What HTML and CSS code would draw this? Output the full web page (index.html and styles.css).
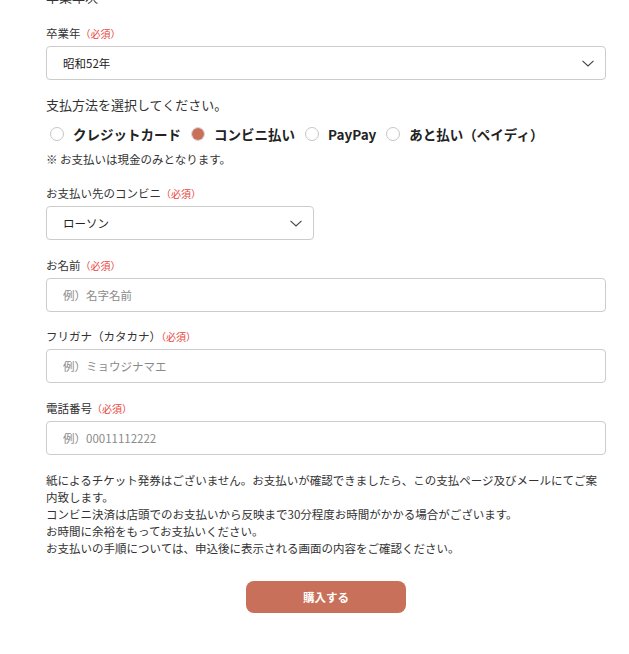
FILE: index.html
```html
<!DOCTYPE html>
<html lang="ja">
<head>
<meta charset="utf-8">
<title>購入フォーム</title>
<link rel="stylesheet" href="styles.css">
</head>
<body>
<div class="form">
  <h2 class="section-title">卒業年次</h2>

  <div class="field">
    <div class="label">卒業年<span class="req">（必須）</span></div>
    <div class="select">
      <span>昭和52年</span>
      <svg class="chev" width="12" height="7" viewBox="0 0 12 7"><path d="M0.5 0.8 L6 6 L11.5 0.8" fill="none" stroke="#444" stroke-width="1.1"/></svg>
    </div>
  </div>

  <div class="pay-title">支払方法を選択してください。</div>
  <div class="radios">
    <label class="radio"><span class="circle"></span><span class="rtext">クレジットカード</span></label>
    <label class="radio"><span class="circle checked"><span class="dot"></span></span><span class="rtext">コンビニ払い</span></label>
    <label class="radio"><span class="circle"></span><span class="rtext">PayPay</span></label>
    <label class="radio"><span class="circle"></span><span class="rtext">あと払い（ペイディ）</span></label>
  </div>
  <div class="note">※ お支払いは現金のみとなります。</div>

  <div class="field">
    <div class="label">お支払い先のコンビニ<span class="req">（必須）</span></div>
    <div class="select small">
      <span>ローソン</span>
      <svg class="chev" width="12" height="7" viewBox="0 0 12 7"><path d="M0.5 0.8 L6 6 L11.5 0.8" fill="none" stroke="#444" stroke-width="1.1"/></svg>
    </div>
  </div>

  <div class="field">
    <div class="label">お名前<span class="req">（必須）</span></div>
    <input class="input" type="text" placeholder="例）名字名前">
  </div>

  <div class="field">
    <div class="label">フリガナ（カタカナ）<span class="req">（必須）</span></div>
    <input class="input" type="text" placeholder="例）ミョウジナマエ">
  </div>

  <div class="field">
    <div class="label">電話番号<span class="req">（必須）</span></div>
    <input class="input" type="text" placeholder="例）00011112222">
  </div>

  <p class="info">紙によるチケット発券はございません。お支払いが確認できましたら、この支払ページ及びメールにてご案内致します。<br>コンビニ決済は店頭でのお支払いから反映まで30分程度お時間がかかる場合がございます。<br>お時間に余裕をもってお支払いください。<br>お支払いの手順については、申込後に表示される画面の内容をご確認ください。</p>

  <div class="actions">
    <button class="buy" type="button">購入する</button>
  </div>
</div>
</body>
</html>
```

FILE: styles.css
```css
* { box-sizing: border-box; }
html, body { margin: 0; padding: 0; background: #fff; }
body {
  font-family: "Noto Sans CJK JP", "Noto Sans", sans-serif;
  color: #333;
  font-size: 11.5px;
}
.form {
  width: 560px;
  margin-left: 46px;
}
.section-title {
  font-size: 13px;
  font-weight: normal;
  line-height: 20px;
  margin: -13px 0 18px;
  color: #333;
}
.field { margin-bottom: 16.5px; }
.label {
  line-height: 17px;
  margin-bottom: 4px;
  color: #333;
}
.req {
  color: #e8453c;
  font-size: 10px;
}
.select {
  height: 34px;
  border: 1px solid #ccc;
  border-radius: 4px;
  display: flex;
  align-items: center;
  justify-content: space-between;
  padding: 0 11px 0 16px;
  color: #222;
  font-size: 11.5px;
}
.select.small { width: 268px; }
.chev { display: block; }
.pay-title {
  font-size: 13px;
  line-height: 20px;
  margin-top: -2px;
  color: #333;
}
.radios {
  display: flex;
  align-items: center;
  height: 22px;
  margin-top: 8px;
  padding-left: 4px;
}
.radio {
  display: flex;
  align-items: center;
  gap: 9px;
  margin-right: 10px;
}
.circle {
  width: 14px;
  height: 14px;
  border: 1px solid #c6c6c6;
  border-radius: 50%;
  display: flex;
  align-items: center;
  justify-content: center;
  flex-shrink: 0;
  background: #fff;
}
.circle.checked { border-color: #d4d4d4; }
.dot {
  width: 12px;
  height: 12px;
  border-radius: 50%;
  background: #c87059;
}
.rtext {
  font-weight: bold;
  font-size: 13.5px;
  color: #222;
  line-height: 22px;
}
.note {
  line-height: 17px;
  margin-top: 6px;
  margin-bottom: 17.5px;
  color: #333;
}
.input {
  display: block;
  width: 100%;
  height: 34px;
  border: 1px solid #ccc;
  border-radius: 4px;
  padding: 0 16px;
  font-family: inherit;
  font-size: 11.5px;
  color: #222;
  outline: none;
  background: #fff;
}
.input::placeholder { color: #8a8a8a; }
.info {
  margin: 17px 0 0;
  line-height: 17px;
  color: #333;
}
.actions {
  display: flex;
  justify-content: center;
  margin-top: 24px;
}
.buy {
  width: 160px;
  height: 32px;
  border: none;
  border-radius: 8px;
  background: #c87059;
  color: #fff;
  font-family: inherit;
  font-weight: bold;
  font-size: 11.5px;
  cursor: pointer;
}
```
